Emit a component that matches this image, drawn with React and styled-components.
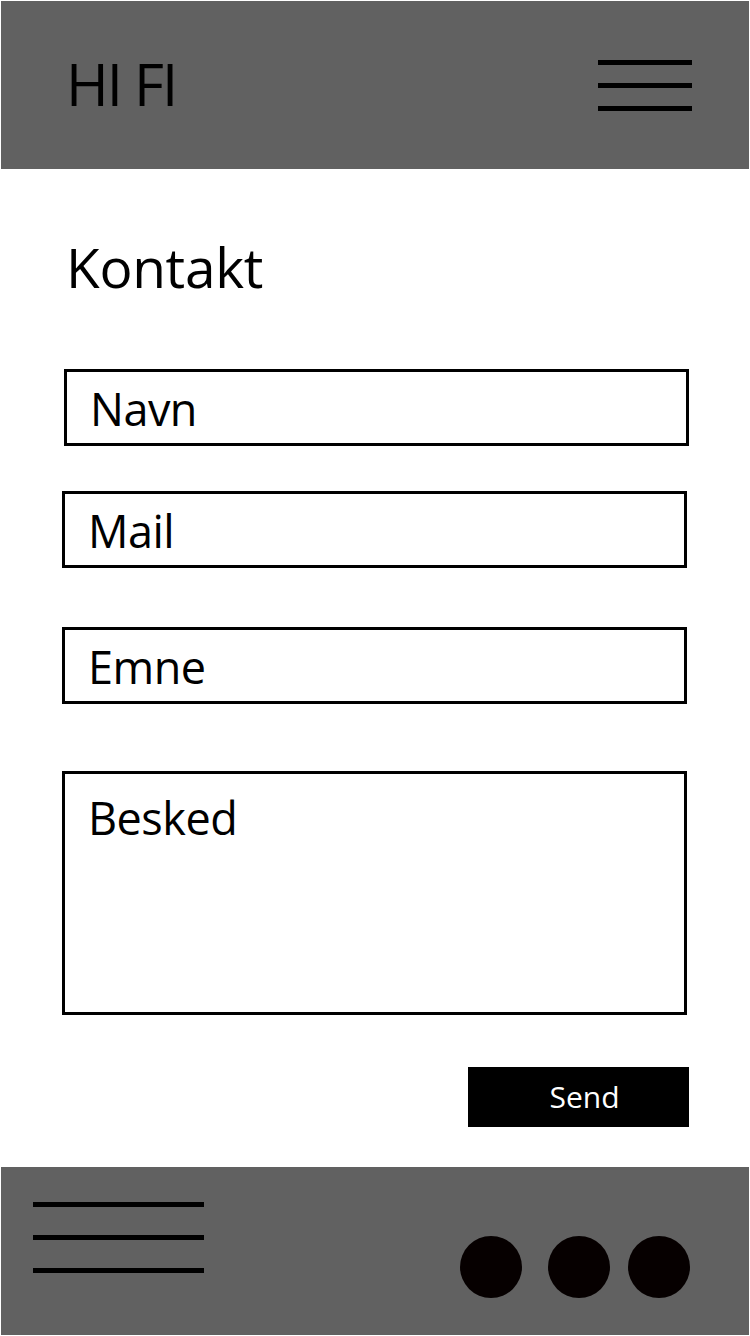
import React from "react";
import styled, { createGlobalStyle } from "styled-components";

const GlobalStyle = createGlobalStyle`
  html, body {
    margin: 0;
    padding: 0;
    background: #ffffff;
  }
  * {
    box-sizing: border-box;
  }
`;

const Page = styled.div`
  width: 750px;
  height: 1336px;
  padding: 1px;
  display: flex;
  flex-direction: column;
  font-family: "Open Sans", "Noto Sans", sans-serif;
  color: #000;
`;

const Header = styled.header`
  height: 168px;
  flex-shrink: 0;
  background: #616161;
  display: flex;
  justify-content: space-between;
  align-items: flex-start;
  padding: 0 57px 0 65px;
`;

const Logo = styled.div`
  margin-top: 54px;
  font-size: 58px;
  line-height: 1;
  letter-spacing: -2px;
  font-weight: 400;
`;

const Lines = styled.div`
  display: flex;
  flex-direction: column;
  gap: ${(p) => p.$gap}px;
  margin-top: ${(p) => p.$top}px;
`;

const Line = styled.span`
  display: block;
  width: ${(p) => p.$width}px;
  height: 5px;
  background: #000;
`;

const Main = styled.main`
  flex: 1;
  display: flex;
  flex-direction: column;
  padding: 70px 0 0 61px;
`;

const Title = styled.h1`
  margin: 0 0 75px 4px;
  font-size: 55px;
  line-height: 1;
  font-weight: 400;
  letter-spacing: -0.3px;
`;

const Field = styled.div`
  width: 625px;
  height: ${(p) => p.$height || 77}px;
  margin-top: ${(p) => p.$top || 0}px;
  margin-left: ${(p) => p.$shift || 0}px;
  border: 3px solid #000;
  display: flex;
  align-items: ${(p) => (p.$multi ? "flex-start" : "center")};
  padding: ${(p) => (p.$multi ? "21px 0 0 23px" : "2px 0 0 23px")};
  font-size: 45px;
  line-height: 1;
  letter-spacing: -0.5px;
`;

const ButtonRow = styled.div`
  display: flex;
  justify-content: flex-end;
  width: 627px;
  margin-top: 52px;
`;

const SendButton = styled.button`
  width: 221px;
  height: 60px;
  border: none;
  background: #000;
  color: #fff;
  font-family: "Open Sans", "Noto Sans", sans-serif;
  font-size: 30px;
  line-height: 1;
  padding: 0 0 0 12px;
  cursor: pointer;
`;

const Footer = styled.footer`
  height: 168px;
  flex-shrink: 0;
  background: #616161;
  display: flex;
  justify-content: space-between;
  align-items: flex-start;
  padding: 0 59px 0 32px;
`;

const Dots = styled.div`
  display: flex;
  margin-top: 69px;
`;

const Dot = styled.span`
  width: 62px;
  height: 62px;
  border-radius: 50%;
  background: #060000;
  margin-left: ${(p) => p.$gap || 0}px;
`;

export default function App() {
  return (
    <>
      <GlobalStyle />
      <Page>
        <Header>
          <Logo>HI FI</Logo>
          <Lines $gap={18} $top={59}>
            <Line $width={94} />
            <Line $width={94} />
            <Line $width={94} />
          </Lines>
        </Header>

        <Main>
          <Title>Kontakt</Title>
          <Field $shift={2}>Navn</Field>
          <Field $top={45}>Mail</Field>
          <Field $top={59}>Emne</Field>
          <Field $top={67} $height={244} $multi>
            Besked
          </Field>
          <ButtonRow>
            <SendButton>Send</SendButton>
          </ButtonRow>
        </Main>

        <Footer>
          <Lines $gap={28} $top={35}>
            <Line $width={171} />
            <Line $width={171} />
            <Line $width={171} />
          </Lines>
          <Dots>
            <Dot />
            <Dot $gap={26} />
            <Dot $gap={18} />
          </Dots>
        </Footer>
      </Page>
    </>
  );
}
